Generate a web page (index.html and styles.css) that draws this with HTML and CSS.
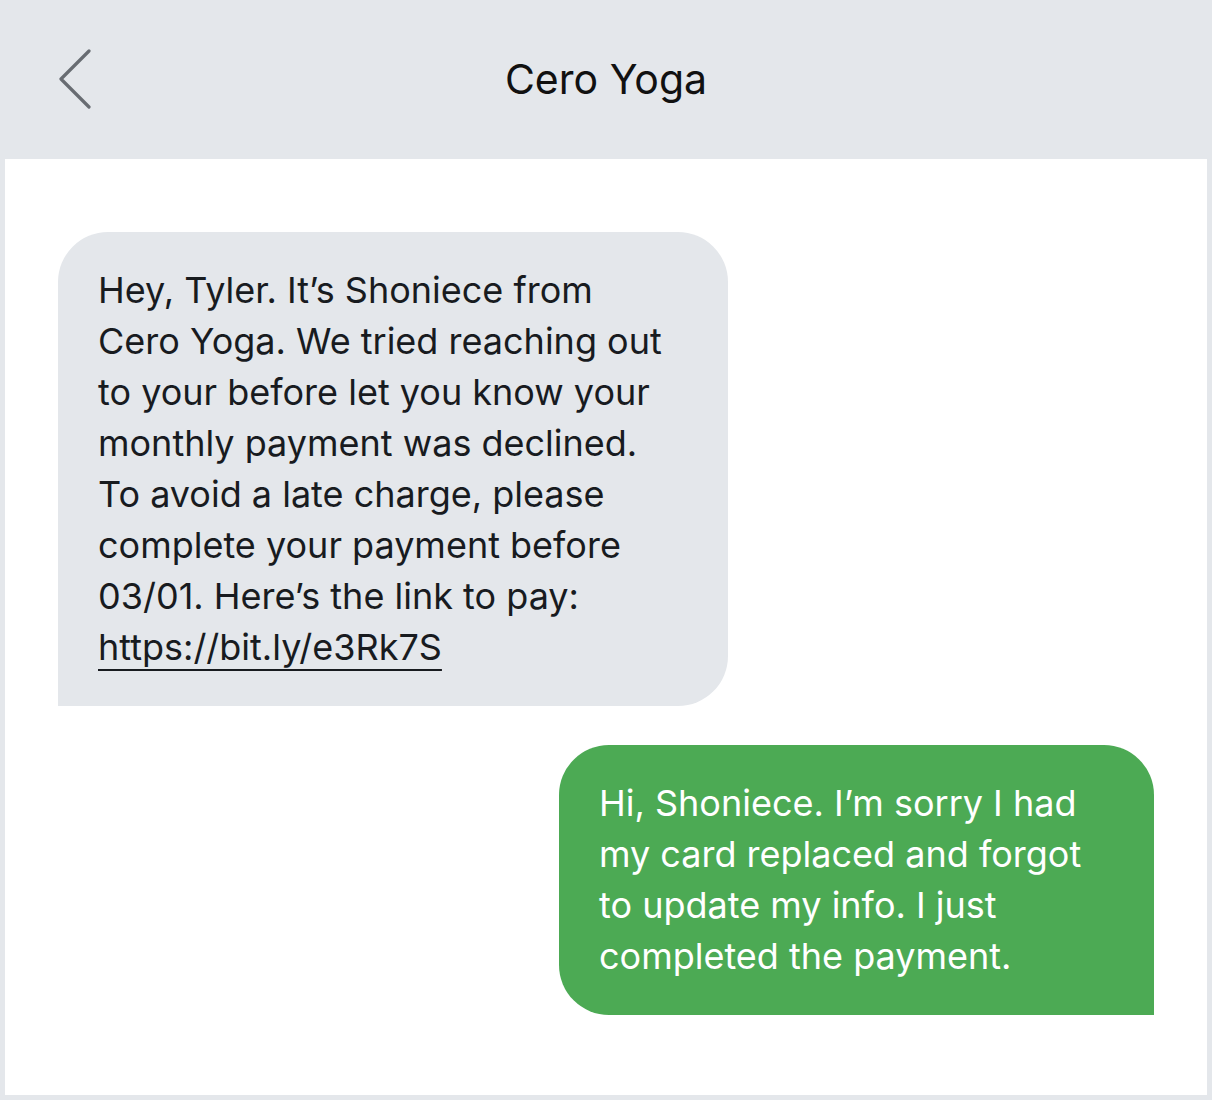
FILE: index.html
```html
<!DOCTYPE html>
<html>
<head>
<meta charset="utf-8">
<link rel="stylesheet" href="styles.css">
</head>
<body>
<div class="header">
  <div class="back">
    <svg width="40" height="64" viewBox="0 0 40 64"><polyline points="30,3 2,31 30,59" fill="none" stroke="#686c72" stroke-width="3.2" stroke-linecap="round" stroke-linejoin="round"/></svg>
  </div>
  <div class="title">Cero Yoga</div>
  <div></div>
</div>
<div class="chat">
  <div class="bubble in">Hey, Tyler. It’s Shoniece from Cero Yoga. We tried reaching out to your before let you know your monthly payment was declined. To avoid a late charge, please complete your payment before 03/01. Here’s the link to pay: <span class="link">https://bit.ly/e3Rk7S</span></div>
  <div class="bubble out">Hi, Shoniece. I’m sorry I had my card replaced and forgot to update my info. I just completed the payment.</div>
</div>
</body>
</html>
```

FILE: styles.css
```css
html, body {
  margin: 0;
  padding: 0;
  background: #e4e7eb;
}
body {
  width: 1212px;
  height: 1100px;
  overflow: hidden;
  font-family: Inter, "Noto Sans", sans-serif;
}
.header {
  height: 159px;
  display: grid;
  grid-template-columns: 200px 1fr 200px;
  align-items: center;
}
.back {
  padding-left: 59px;
  padding-top: 1px;
  display: flex;
  align-items: center;
}
.back svg {
  display: block;
}
.title {
  text-align: center;
  font-size: 41px;
  color: #111;
  padding-bottom: 1px;
}
.chat {
  margin: 0 5px;
  height: 936px;
  background: #fff;
  padding: 73px 53px 0 53px;
  box-sizing: border-box;
  display: flex;
  flex-direction: column;
  gap: 39px;
}
.bubble {
  font-size: 36px;
  line-height: 51px;
  padding: 33px 40px;
  box-sizing: border-box;
}
.bubble.in {
  width: 670px;
  height: 474px;
  padding-right: 52px;
  align-self: flex-start;
  background: #e4e7eb;
  color: #181b1f;
  border-radius: 50px 50px 50px 0;
}
.bubble.out {
  width: 595px;
  height: 270px;
  align-self: flex-end;
  background: #4caa54;
  color: #fff;
  border-radius: 50px 50px 0 50px;
}
.link {
  text-decoration: underline;
  text-decoration-thickness: 2px;
  text-underline-offset: 9px;
}
```
